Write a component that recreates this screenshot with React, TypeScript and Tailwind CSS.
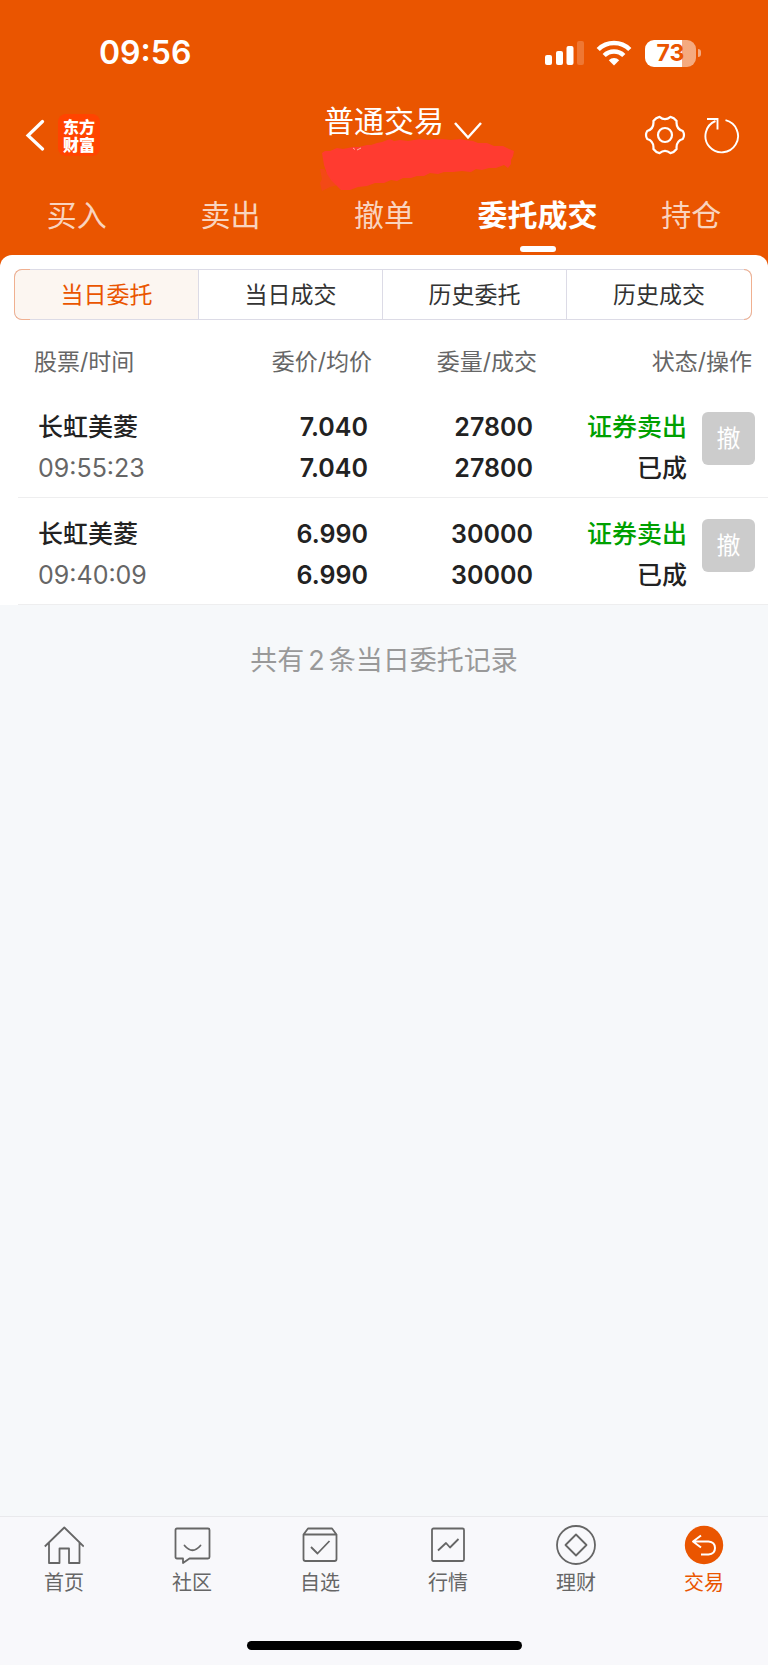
import type { ReactNode } from 'react';

const tabs = ['买入', '卖出', '撤单', '委托成交', '持仓'];
const filters = ['当日委托', '当日成交', '历史委托', '历史成交'];

const orders = [
  { name: '长虹美菱', time: '09:55:23', price: '7.040', avg: '7.040', qty: '27800', filled: '27800' },
  { name: '长虹美菱', time: '09:40:09', price: '6.990', avg: '6.990', qty: '30000', filled: '30000' },
];

const NavIcon = ({ children }: { children: ReactNode }) => (
  <svg
    className="h-10 w-10"
    viewBox="0 0 40 40"
    fill="none"
    stroke="currentColor"
    strokeWidth={1.8}
    strokeLinejoin="round"
    aria-hidden="true"
  >
    {children}
  </svg>
);

const navItems = [
  {
    label: '首页',
    icon: (
      <NavIcon>
        <path d="M.8 21.5 20.3 2.5l19.5 19M5 18v20h10.500V23.500h9.500V38h10.500V18" />
      </NavIcon>
    ),
  },
  {
    label: '社区',
    icon: (
      <NavIcon>
        <path d="M5 3.500h31q1.500 0 1.500 1.500v27q0 1.500-1.500 1.500H17.500L11 38v-4.500H5q-1.500 0-1.500-1.500V5q0-1.500 1.500-1.500z" />
        <path d="M12.500 20.500q8 9.500 16 0" strokeLinecap="round" />
      </NavIcon>
    ),
  },
  {
    label: '自选',
    icon: (
      <NavIcon>
        <path d="M3.500 9.500v24.500q0 2 2 2h29q2 0 2-2V9.500l-4.500-6h-24zM3.500 9.500h33" />
        <path d="m11 22 6.500 6.500L29.500 16" />
      </NavIcon>
    ),
  },
  {
    label: '行情',
    icon: (
      <NavIcon>
        <rect x="4" y="3.500" width="32" height="32.500" rx="1.500" />
        <path d="m10 25.500 8-7.500 4 4.500 8.500-8.500" />
      </NavIcon>
    ),
  },
  {
    label: '理财',
    icon: (
      <NavIcon>
        <circle cx="20" cy="20" r="19" />
        <path d="M20 9.500 30.500 20 20 30.500 9.500 20z" />
      </NavIcon>
    ),
  },
  {
    label: '交易',
    active: true,
    icon: (
      <NavIcon>
        <circle cx="20" cy="20" r="19.200" fill="currentColor" stroke="none" />
        <path d="M17 10.500 9 16.500l8 6M9.500 16.500h15q6.500.5 6.500 6.500t-6.500 6.500H17" stroke="#fff" strokeWidth={2} />
      </NavIcon>
    ),
  },
];

const StatusBar = () => (
  <div className="flex h-26 items-center justify-between pt-0.5 pr-[67px] pl-[99px]">
    <span className="font-[Inter] text-[32px] leading-8 font-semibold">09:56</span>
    <div className="flex items-center">
      <svg className="mr-3 h-[26px] w-10" viewBox="0 0 40 26" fill="currentColor" aria-hidden="true">
        <rect x="1" y="15" width="7" height="10" rx="2" />
        <rect x="12" y="11" width="7" height="14" rx="2" />
        <rect x="22.500" y="6" width="7" height="19" rx="2" />
        <rect x="33" y="1" width="7" height="24" rx="2" opacity=".2" />
      </svg>
      <svg
        className="mr-[13px] h-[26px] w-[36px]"
        viewBox="0 0 36 26"
        fill="none"
        stroke="currentColor"
        strokeWidth={4.500}
        aria-hidden="true"
      >
        <path d="M2.200 9.500a22.500 22.500 0 0 1 31.600 0M8.200 15.500a14 14 0 0 1 19.600 0" />
        <path d="M12.800 20.200a7.500 7.500 0 0 1 10.400 0L18 25.500z" fill="currentColor" stroke="none" />
      </svg>
      <div className="flex h-[27px] w-[51px] items-center justify-center rounded-[9px] bg-linear-to-r from-white from-73% to-white/50 to-73% font-[Inter] text-[23px] leading-6 font-bold text-[#ea5500]">
        73
      </div>
      <span className="ml-0.5 h-2 w-[3px] rounded-r-full bg-white/50" />
    </div>
  </div>
);

const TitleBar = () => (
  <div className="relative flex h-[62px] items-center justify-between pr-7 pl-6">
    <div className="flex items-center gap-3">
      <button type="button" aria-label="返回">
        <svg className="h-8 w-[22px]" viewBox="0 0 22 32" fill="none" stroke="currentColor" strokeWidth={3.200} aria-hidden="true">
          <path d="M18.500 2.500 4 16.500 18.500 30" strokeLinecap="round" />
        </svg>
      </button>
      <span className="flex h-[42px] w-[42px] items-center justify-center rounded-lg bg-[#ff4400] px-[5px] text-center font-['Noto_Sans_CJK_SC',sans-serif] text-base leading-[18px] font-black">
        东方财富
      </span>
    </div>
    <button type="button" className="absolute top-0 left-1/2 -translate-x-1/2 text-[30px] leading-[34px]">
      普通交易
      <svg
        className="absolute top-[18px] left-full ml-2.5 h-[18px] w-[30px]"
        viewBox="0 0 30 18"
        fill="none"
        stroke="currentColor"
        strokeWidth={2.500}
        aria-hidden="true"
      >
        <path d="m1 1 13 14.500L27 1" />
      </svg>
    </button>
    {/* marker stroke hiding the account number */}
    <svg className="absolute top-[34px] left-1/2 -ml-[65px] h-[56px] w-[196px]" viewBox="319 138 196 56" aria-hidden="true">
      <path
        d="M322 153l3-2 5 0 7-3 6 1 10-2 6 0 8-2 4 0 6-2 5-1 8-3 4 2 6-1 8 1 12-2 8 1 6-1 9 0 8 1 9-1 5 1 8 1 5 2 9 0 7 3 9 0 6 3 5 2-1 5-2 4 0 4-3 4-4-3-8 3-7 0-7 2-6-1-5 3-9-1-9 1-9 0-6 2-8-1-6 3-7 0-6 2-8 0-6 3-6-1-7 3-9 0-8 3-9 1-8 3-9 0-5-5-5-5-4-6-3-9z"
        fill="#ff3b30"
      />
      <path d="M320 169l4 0 6 9 8 7-8 2-8 4-2-8 2-4z" fill="#ff3b30" opacity=".45" />
      <path d="M353 148l2 1.500M357 150l4-2" stroke="#ffb0a0" strokeWidth="1" />
    </svg>
    <div className="flex items-center gap-[18px]">
      <button type="button" aria-label="设置">
        <svg className="h-[42px] w-[42px]" viewBox="0 0 42 42" fill="none" stroke="currentColor" strokeWidth={2.200} strokeLinejoin="round" aria-hidden="true">
          <path d="M15.500 2.800Q21 7.500 26.500 2.800 30 3.500 32.600 7 31.800 15 38.800 17q2.400 4 0 8-7 2-6.200 10-2.600 3.500-6.100 4.200Q21 34.500 15.500 39.200 12 38.500 9.400 35 10.200 27 3.200 25q-2.400-4 0-8 7-2 6.200-10Q12 3.500 15.500 2.800z" />
          <circle cx="21" cy="21" r="7" />
        </svg>
      </button>
      <button type="button" aria-label="刷新">
        <svg className="h-[38px] w-9" viewBox="0 0 36 38" fill="none" stroke="currentColor" strokeWidth={1.900} aria-hidden="true">
          <path d="M21.500 4.200A16.300 16.300 0 1 1 11.500 5M3 3h10.500V13.500" />
        </svg>
      </button>
    </div>
  </div>
);

const OrderTable = () => (
  <div className="pl-[18px]">
    <table className="w-full table-fixed text-right text-[25px] leading-[41px] text-[#222]">
      <colgroup>
        <col />
        <col />
        <col className="w-[165px]" />
        <col className="w-[154px]" />
        <col className="w-[77px]" />
      </colgroup>
      <thead className="text-[23px] text-[#666]">
        <tr>
          <th className="pt-[22px] pb-2 pl-4 text-left font-normal">股票/时间</th>
          <th className="pt-[22px] pb-2 font-normal">委价/均价</th>
          <th className="pt-[22px] pb-2 font-normal">委量/成交</th>
          <th colSpan={2} className="pt-[22px] pr-4 pb-2 font-normal">
            状态/操作
          </th>
        </tr>
      </thead>
      <tbody>
        {orders.map((o) => (
          <tr key={o.time} className="border-b border-[#eeeeef] font-medium">
            <td className="pt-4 pb-2 pl-5 text-left">
              <div>{o.name}</div>
              <div className="font-[Inter] font-normal text-[#666]">{o.time}</div>
            </td>
            <td className="pt-4 pr-1 pb-2 font-[Inter] font-semibold">
              <div>{o.price}</div>
              <div>{o.avg}</div>
            </td>
            <td className="pt-4 pr-1 pb-2 font-[Inter] font-semibold">
              <div>{o.qty}</div>
              <div>{o.filled}</div>
            </td>
            <td className="pt-4 pr-1 pb-2">
              <div className="text-[#00a000]">证券卖出</div>
              <div>已成</div>
            </td>
            <td className="pt-[21px] pl-[11px] text-left align-top">
              <button type="button" className="block h-[53px] w-[53px] rounded-md bg-[#ccc] text-center text-2xl font-normal text-white">
                撤
              </button>
            </td>
          </tr>
        ))}
      </tbody>
    </table>
  </div>
);

export default function App() {
  return (
    <div className="flex min-h-screen flex-col bg-[#f6f8fa] font-[Inter,'Noto_Sans_CJK_SC',sans-serif]">
      <header className="bg-[#ea5500] text-white">
        <StatusBar />
        <TitleBar />
        <nav className="grid grid-cols-5 pt-[25px] pb-[3px] text-[30px] leading-[48px]">
          {tabs.map((tab) => {
            const active = tab === '委托成交';
            return (
              <button
                key={tab}
                type="button"
                className={active ? 'flex flex-col items-center font-bold' : 'flex flex-col items-center text-white/75'}
              >
                {tab}
                <span className={active ? 'mt-[7px] h-1.5 w-9 rounded-full bg-white' : 'mt-[7px] h-1.5'} />
              </button>
            );
          })}
        </nav>
      </header>

      <main className="flex-1">
        <div className="bg-[#ea5500]">
          <section className="rounded-t-xl bg-white pt-3.5">
            <div className="relative mr-4 ml-3.5 grid h-[51px] grid-cols-4 divide-x divide-[#dcdbe6] rounded-lg border border-[#dcdbe6] text-[23px] text-[#333] before:absolute before:-inset-y-px before:-left-px before:w-4 before:rounded-l-lg before:border-y before:border-l before:border-[#f0b090] after:absolute after:-inset-y-px after:-right-px after:w-2 after:rounded-r-lg after:border-y after:border-r after:border-[#f0b090]">
              {filters.map((f, i) => (
                <button key={f} type="button" className={i === 0 ? 'rounded-l-lg bg-[#fcf6f1] pt-0.5 text-[#ea5500]' : 'pt-0.5'}>
                  {f}
                </button>
              ))}
            </div>
            <OrderTable />
          </section>
        </div>
        <p className="pt-[34px] text-center text-[27px] leading-[44px] text-[#999]">
          共有<span className="mx-1">2</span>条当日委托记录
        </p>
      </main>

      <footer className="border-t border-[#e9e9ec] bg-[#f8f8fb]">
        <nav className="grid grid-cols-6 pt-2 text-xl leading-9 text-[#666]">
          {navItems.map((item) => (
            <a key={item.label} href="#" className={item.active ? 'flex flex-col items-center text-[#ea5500]' : 'flex flex-col items-center'}>
              {item.icon}
              <span>{item.label}</span>
            </a>
          ))}
        </nav>
        <div className="mx-auto mt-10 mb-[15px] h-[9px] w-[275px] rounded-full bg-black" />
      </footer>
    </div>
  );
}
